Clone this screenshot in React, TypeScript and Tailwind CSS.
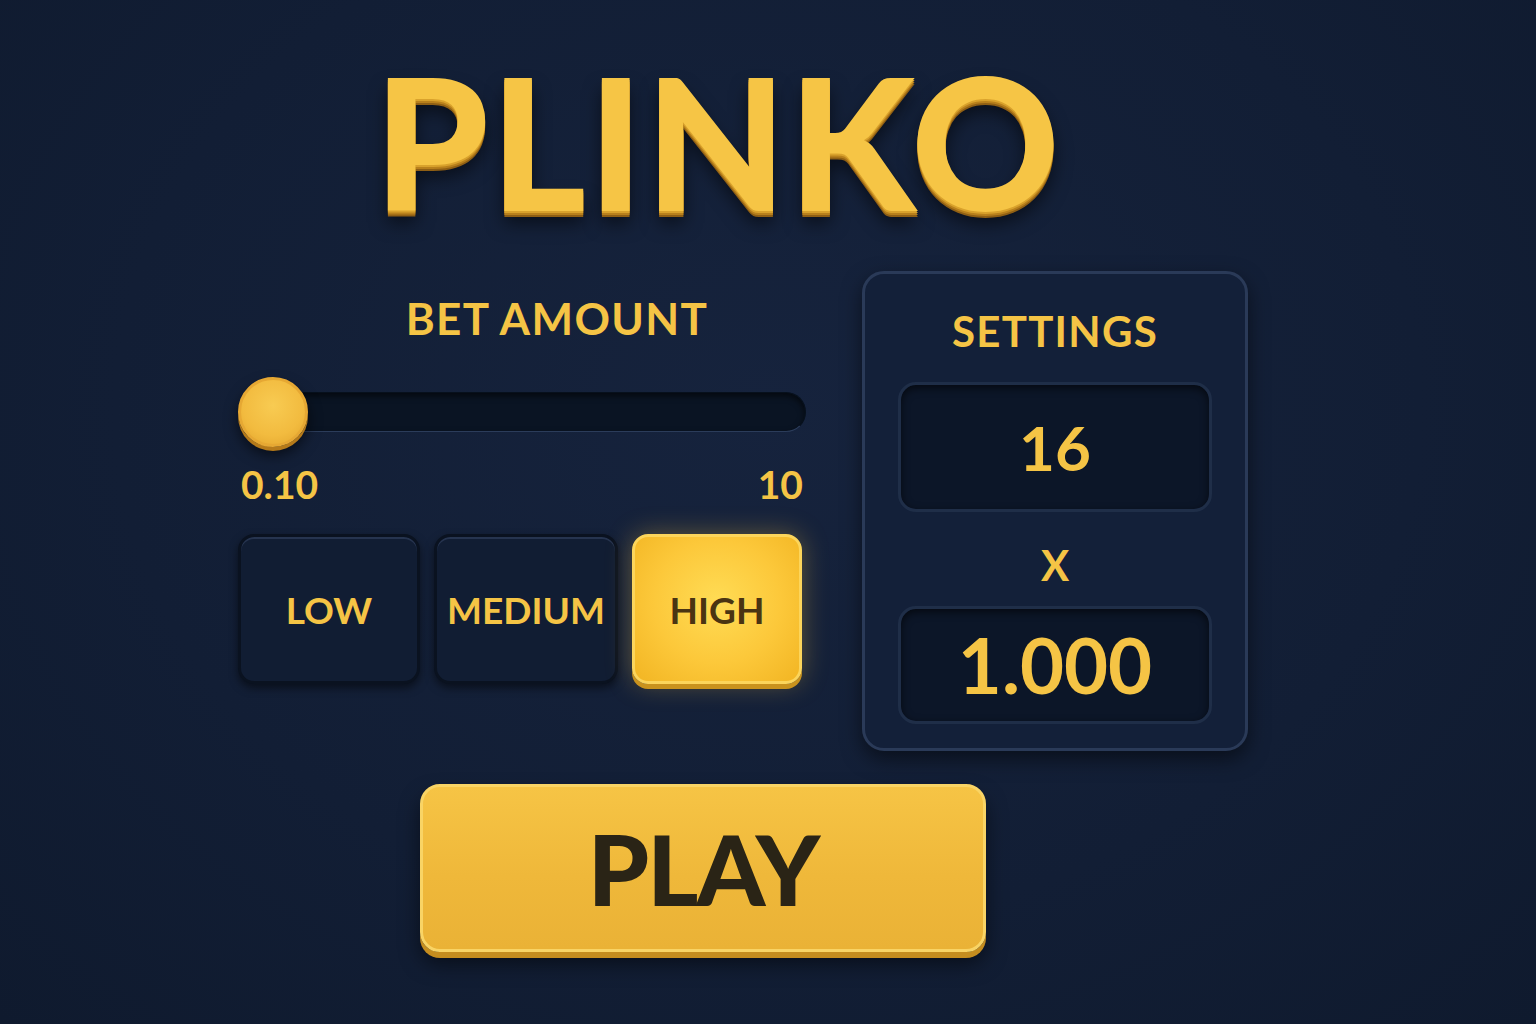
import { useState } from "react";

const LEVELS = ["LOW", "MEDIUM", "HIGH"];

export default function App() {
  const [level, setLevel] = useState("HIGH");

  return (
    <main className="w-full h-[1024px] overflow-hidden bg-[radial-gradient(ellipse_at_50%_40%,#16233d_0%,#121e35_60%,#0f1a2e_100%)] font-['Lato','Noto_Sans',sans-serif]">
      <div className="w-[1010px] ml-[238px] flex flex-col">
        {/* title */}
        <h1 className="pl-[136px] pt-[49px] h-[248px] text-[183px] leading-none font-black tracking-[0.01em] text-[#f6c545] [text-shadow:0_2px_0_#d9a22c,0_4px_0_#b8801c,0_6px_0_#8f5f14,0_12px_18px_rgba(0,0,0,0.55)]">
          PLINKO
        </h1>

        <div className="flex gap-[56px]">
          {/* bet column */}
          <div className="w-[568px] flex flex-col pt-[48px]">
            <h2 className="pl-[70px] text-center text-[44px] leading-none font-bold tracking-[0.03em] text-[#f5c445]">
              BET AMOUNT
            </h2>

            <div className="relative mt-[36px] h-[72px] flex items-center">
              <div className="ml-[2px] w-[566px] h-[40px] rounded-full bg-[#0a1423] border border-[#07101c] border-b-[#2b3c5a] shadow-[inset_0_3px_6px_rgba(0,0,0,0.6)]" />
              <div className="absolute left-0 top-[1px] w-[70px] h-[70px] rounded-full bg-[radial-gradient(circle_at_50%_40%,#f8cb52_0%,#f2bb3f_60%,#e1a32c_100%)] border-[3px] border-[#e6a833] shadow-[0_4px_0_#b57a1a,0_8px_14px_rgba(0,0,0,0.6)]" />
            </div>

            <div className="flex justify-between mt-[17px] px-[3px] text-[39px] leading-none font-bold text-[#f5c445]">
              <span>0.10</span>
              <span>10</span>
            </div>

            <div className="flex gap-[14px] mt-[30px]">
              {LEVELS.map((l) => {
                const active = l === level;
                return (
                  <button
                    key={l}
                    onClick={() => setLevel(l)}
                    className={`h-[150px] flex items-center justify-center rounded-[16px] text-[37px] font-bold leading-none ${
                      l === "HIGH" ? "w-[170px]" : l === "MEDIUM" ? "w-[184px]" : "w-[182px]"
                    } ${
                      active
                        ? "bg-[radial-gradient(ellipse_at_50%_45%,#ffdc55_0%,#fcc83a_55%,#f2b523_100%)] border-[3px] border-[#fcd55b] text-[#4a3412] shadow-[0_5px_0_#c9921d,0_0_26px_rgba(245,190,60,0.35)]"
                        : "bg-[#111d33] border-[3px] border-[#0a1220] text-[#f5c445] shadow-[inset_0_2px_0_#26344f,0_4px_8px_rgba(0,0,0,0.5)]"
                    }`}
                  >
                    {l}
                  </button>
                );
              })}
            </div>
          </div>

          {/* settings */}
          <div className="w-[386px] h-[480px] mt-[23px] rounded-[22px] bg-[#132039] border-[3px] border-[#2a3a58] shadow-[0_8px_20px_rgba(0,0,0,0.5)] flex flex-col items-center px-[33px]">
            <h2 className="mt-[36px] text-[42px] leading-none font-bold tracking-[0.03em] text-[#f5c445]">
              SETTINGS
            </h2>
            <div className="mt-[30px] w-full h-[130px] rounded-[18px] bg-[#0c1628] border-[3px] border-[#1f2e48] shadow-[inset_0_3px_8px_rgba(0,0,0,0.6)] flex items-center justify-center text-[62px] font-bold leading-none text-[#f5c445]">
              16
            </div>
            <div className="mt-[32px] text-[42px] leading-none font-bold text-[#f5c445]">X</div>
            <div className="mt-[20px] w-full h-[118px] rounded-[18px] bg-[#0c1628] border-[3px] border-[#1f2e48] shadow-[inset_0_3px_8px_rgba(0,0,0,0.6)] flex items-center justify-center text-[76px] font-bold leading-none text-[#f5c445]">
              1.000
            </div>
          </div>
        </div>

        {/* play */}
        <button className="ml-[182px] mt-[33px] w-[566px] h-[168px] rounded-[20px] bg-[linear-gradient(180deg,#f6c445_0%,#efb83a_55%,#eab236_100%)] border-[3px] border-[#f9d465] shadow-[0_6px_0_#c58d1f,0_12px_20px_rgba(0,0,0,0.5)] flex items-center justify-center text-[98px] font-black leading-none tracking-[-0.02em] text-[#2a2416]">
          PLAY
        </button>
      </div>
    </main>
  );
}
